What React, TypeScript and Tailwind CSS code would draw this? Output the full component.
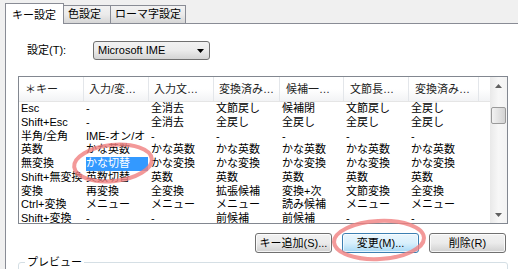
import React from 'react';

const columns = [
  { title: '＊キー', w: 'w-[65px]', hp: 'pl-[6px]' },
  { title: '入力/変…', w: 'w-[65px]', hp: 'pl-[5px]' },
  { title: '入力文…', w: 'w-[65px]', hp: 'pl-[5px]' },
  { title: '変換済み…', w: 'w-[66px]', hp: 'pl-[5px]' },
  { title: '候補一…', w: 'w-[64px]', hp: 'pl-[6px]' },
  { title: '文節長…', w: 'w-[65px]', hp: 'pl-[6px]' },
  { title: '変換済み…', w: 'w-[70px]', hp: 'pl-[6px]' },
];

const rows = [
  ['Esc', '-', '全消去', '文節戻し', '候補閉', '文節戻し', '全戻し'],
  ['Shift+Esc', '-', '全消去', '全戻し', '全戻し', '全戻し', '全戻し'],
  ['半角/全角', 'IME-オン/オ', '-', '-', '-', '-', '-'],
  ['英数', 'かな英数', 'かな英数', 'かな英数', 'かな英数', 'かな英数', 'かな英数'],
  ['無変換', 'かな切替', 'かな変換', 'かな変換', 'かな変換', 'かな変換', 'かな変換'],
  ['Shift+無変換', '英数切替', '英数', '英数', '英数', '英数', '英数'],
  ['変換', '再変換', '全変換', '拡張候補', '変換+次', '文節変換', '全変換'],
  ['Ctrl+変換', 'メニュー', 'メニュー', 'メニュー', '読み候補', 'メニュー', 'メニュー'],
  ['Shift+変換', '-', '-', '前候補', '前候補', '-', '-'],
];

const KeyList: React.FC = () => (
  <div className="flex h-[148px] w-[490px] overflow-hidden border border-[#828790] bg-white">
    <div className="flex w-[471px] flex-col overflow-hidden">
      <div className="flex h-[25px] shrink-0 bg-gradient-to-b from-white from-50% to-[#f2f3f5] border-b border-[#e5e5e5]">
        {columns.map((c, i) => (
          <div
            key={i}
            className={`${c.w} ${c.hp} flex shrink-0 items-center overflow-hidden whitespace-nowrap border-r border-[#e3e6ea] text-[#1e1e1e]`}
          >
            {c.title}
          </div>
        ))}
      </div>
      {rows.map((r, ri) => (
        <div key={ri} className="flex h-[13.75px] shrink-0 leading-[13.75px]">
          {r.map((cell, ci) => {
            const selected = ri === 4 && ci === 1;
            return (
              <div
                key={ci}
                className={`${columns[ci].w} shrink-0 overflow-hidden whitespace-nowrap pl-[2px]`}
              >
                {selected ? (
                  <div className="mr-[1px] bg-[#3399ff] text-white">{cell}</div>
                ) : (
                  cell
                )}
              </div>
            );
          })}
        </div>
      ))}
    </div>
    <div className="flex w-[17px] flex-col items-center bg-gradient-to-r from-[#e9e9e9] via-[#f7f7f7] to-[#f3f3f3]">
      <div className="flex h-[17px] w-full items-center justify-center">
        <svg width="7" height="4" viewBox="0 0 7 4">
          <path d="M3.5 0 L7 4 L0 4 Z" fill="#606060" />
        </svg>
      </div>
      <div className="mt-[13px] h-[17px] w-[15px] rounded-[2px] border border-[#9a9a9a] bg-gradient-to-r from-[#f2f2f2] to-[#d3d3d3]" />
      <div className="flex-1" />
      <div className="flex h-[17px] w-full items-center justify-center">
        <svg width="7" height="4" viewBox="0 0 7 4">
          <path d="M0 0 L7 0 L3.5 4 Z" fill="#606060" />
        </svg>
      </div>
    </div>
  </div>
);

const Button: React.FC<{ label: string; focused?: boolean }> = ({ label, focused }) => (
  <div
    className={`flex h-[20px] w-[77px] items-center justify-center rounded-[3px] border leading-none whitespace-nowrap ${
      focused
        ? 'border-[#3c7fb1] bg-gradient-to-b from-[#eaf6fd] via-[#d9f0fc] to-[#a7d9f5] shadow-[inset_0_0_0_1px_#ffffffb0]'
        : 'border-[#707070] bg-gradient-to-b from-[#f2f2f2] via-[#ebebeb] to-[#d0d0d0] shadow-[inset_0_0_0_1px_#ffffffc0]'
    }`}
  >
    {label}
  </div>
);

export default function App() {
  return (
    <div className="relative flex h-[269px] w-[518px] flex-col overflow-hidden bg-[#f0f0f0] font-['Liberation_Sans','Noto_Sans_CJK_JP',sans-serif] text-[11px] text-black">
      <div className="flex h-[23px] shrink-0 items-end pl-[5px]">
        <div className="relative z-10 -mb-px flex h-[21px] w-[59px] items-start border-x border-t border-[#898c95] bg-white pl-[6px] pt-[3px]">
          キー設定
        </div>
        <div className="flex h-[18px] w-[47px] items-center border-r border-t border-[#898c95] bg-gradient-to-b from-[#f2f2f2] via-[#ebebeb] to-[#d6d6d6] pl-[4px]">
          色設定
        </div>
        <div className="flex h-[18px] w-[75px] items-center border-r border-t border-[#898c95] bg-gradient-to-b from-[#f2f2f2] via-[#ebebeb] to-[#d6d6d6] pl-[4px]">
          ローマ字設定
        </div>
      </div>

      <div className="ml-[5px] flex flex-1 flex-col border-l border-t border-[#898c95] bg-white pl-[12px]">
        <div className="mt-[17px] flex h-[19px] items-center">
          <span className="ml-[9px] w-[66px]">設定(T):</span>
          <div className="flex h-[19px] w-[117px] items-center justify-between rounded-[3px] border border-[#707070] bg-gradient-to-b from-[#f2f2f2] via-[#ebebeb] to-[#d4d4d4] pl-[4px] pr-[5px]">
            <span>Microsoft IME</span>
            <svg width="7" height="4" viewBox="0 0 7 4">
              <path d="M0 0 L7 0 L3.5 4 Z" fill="#000" />
            </svg>
          </div>
        </div>

        <div className="mt-[16px]">
          <KeyList />
        </div>

        <div className="mt-[9px] flex w-[488px] justify-end gap-[10px]">
          <Button label="キー追加(S)..." />
          <Button label="変更(M)..." focused />
          <Button label="削除(R)" />
        </div>

        <fieldset className="mt-[2px] h-[30px] w-[490px] rounded-[3px] border border-[#d5dfe5]">
          <legend className="ml-[6px] px-[2px] leading-[14px]">プレビュー</legend>
        </fieldset>
      </div>

      <svg className="pointer-events-none absolute left-0 top-0" width="518" height="269" viewBox="0 0 518 269">
        <ellipse cx="113" cy="163" rx="39" ry="18" transform="rotate(-6 113 163)" fill="none" stroke="#f07f7f" strokeOpacity="0.8" strokeWidth="4" />
        <ellipse cx="379" cy="240" rx="45" ry="19" transform="rotate(-3 379 240)" fill="none" stroke="#f07f7f" strokeOpacity="0.8" strokeWidth="4" />
      </svg>
    </div>
  );
}
